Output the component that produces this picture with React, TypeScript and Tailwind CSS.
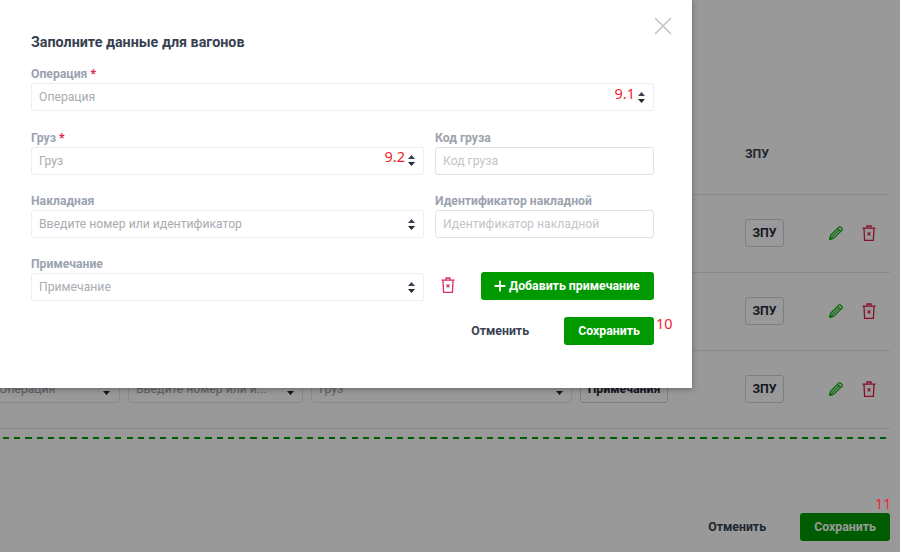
import { Plus, X } from "lucide-react";

const font = { fontFamily: "Roboto, 'Noto Sans', sans-serif" };
const markFont = { fontFamily: "'Noto Sans', sans-serif" };

function Caret() {
  return (
    <svg width="9" height="13" viewBox="0 0 9 13" className="shrink-0">
      <path d="M4.5 1 8 5H1z" fill="#374151" />
      <path d="M4.5 12 8 8H1z" fill="#1f2937" />
    </svg>
  );
}

function Trash({ className }: { className?: string }) {
  return (
    <svg width="14" height="16" viewBox="0 0 14 16" fill="none" stroke="currentColor" strokeWidth="1.3" className={className}>
      <path d="M.5 3.2h13M5 3V1h4v2M2 3.4l.6 11.9h8.8L12 3.4" />
      <path d="M5.6 7.4l2.8 3M8.4 7.4l-2.8 3" strokeWidth="1.2" />
    </svg>
  );
}

function PencilIcon({ className }: { className?: string }) {
  return (
    <svg width="14" height="14" viewBox="0 0 14 14" fill="none" stroke="currentColor" strokeWidth="1.3" className={className}>
      <path d="M.8 13.2l1-4L10 1c.5-.4 1-.4 1.4 0L13 2.600c.4.4.4.9 0 1.400l-8.200 8.200z" />
      <path d="M3 11l7.600-7.600M8.600 2.400l3 3" strokeWidth="1.1" />
      <path d="M.8 13.200l.6-2.400 1.800 1.800z" fill="currentColor" />
    </svg>
  );
}

function SelectBox({ placeholder, mark, className }: { placeholder: string; mark?: string; className?: string }) {
  return (
    <div className={`flex h-[28px] items-center justify-between rounded-[3px] border border-[#eceef1] bg-white pr-[7px] pl-[7px] ${className ?? ""}`}>
      <span className="text-[12.2px] text-[#a9acb1]">{placeholder}</span>
      <div className="flex items-center gap-[2px]">
        {mark && <span className="-mt-[9px] text-[14.5px] leading-none text-[#f5222d]" style={markFont}>{mark}</span>}
        <Caret />
      </div>
    </div>
  );
}

function TextBox({ placeholder }: { placeholder: string }) {
  return (
    <div className="flex h-[28px] items-center rounded-[3px] border border-[#dfe3e8] bg-white pl-[7px]">
      <span className="text-[12.2px] text-[#c2c5c9]">{placeholder}</span>
    </div>
  );
}

function Label({ text, required }: { text: string; required?: boolean }) {
  return (
    <div className="mb-[1px] h-[16px] text-[12.2px] leading-[16px] font-bold text-[#9ca3af]">
      {text}
      {required && <span className="text-[#e11d48]"> *</span>}
    </div>
  );
}

function TableRow({ children }: { children?: React.ReactNode }) {
  return (
    <div className="flex h-[78px] items-center border-b border-[#e5e7eb] pb-[1px]">
      <div className="flex w-[745px] items-center gap-[8px]">{children}</div>
      <div className="flex h-[28px] w-[39px] items-center justify-center rounded-[3px] border border-[#d1d5db] text-[12.3px] font-bold text-[#1f2937]">ЗПУ</div>
      <PencilIcon className="ml-[45px] text-[#12b012]" />
      <Trash className="ml-[19px] text-[#e11d48]" />
    </div>
  );
}

export default function App() {
  return (
    <div className="relative h-[552px] w-[900px] overflow-hidden bg-white" style={font}>
      {/* page under the modal */}
      <div className="pr-[10px]">
        <div className="flex h-[195px] items-center border-b border-[#e5e7eb] pt-[115px]">
          <span className="ml-[745px] text-[12.3px] font-bold text-[#374151]">ЗПУ</span>
        </div>
        <TableRow />
        <TableRow />
        <TableRow>
          <div className="ml-[-10px] flex h-[27px] w-[130px] items-center justify-between rounded-[3px] border border-[#e5e7eb] px-[8px]">
            <span className="text-[12.2px] text-[#9ca3af]">Операция</span>
            <Caret />
          </div>
          <div className="flex h-[27px] w-[175px] items-center justify-between rounded-[3px] border border-[#e5e7eb] px-[7px]">
            <span className="text-[12.2px] text-[#9ca3af]">Введите номер или и...</span>
            <Caret />
          </div>
          <div className="flex h-[27px] w-[261px] items-center justify-between rounded-[3px] border border-[#e5e7eb] px-[7px]">
            <span className="text-[12.2px] text-[#9ca3af]">Груз</span>
            <Caret />
          </div>
          <div className="flex h-[27px] w-[88px] items-center justify-center rounded-[3px] border border-[#d1d5db] text-[12.3px] font-bold text-[#1f2937]">Примечания</div>
        </TableRow>
        <div className="mt-[8px] mr-[4px] ml-[3px] h-[2px] bg-[repeating-linear-gradient(90deg,#009900_0_6px,transparent_6px_11.25px)]" />
        <div className="mt-[74px] flex items-center justify-end gap-[34px]">
          <span className="text-[12.3px] font-bold text-[#374151]">Отменить</span>
          <div className="flex h-[28px] w-[90px] items-center justify-center rounded-[3px] bg-[#009900] text-[12.3px] font-bold text-white">Сохранить</div>
        </div>
      </div>

      {/* overlay */}
      <div className="absolute inset-0 bg-black/40" />
      <span className="absolute top-[495px] left-[875px] text-[14.5px] leading-[16px] text-[#f5222d]" style={markFont}>11</span>

      {/* modal */}
      <div className="absolute top-0 left-0 h-[388px] w-[692px] bg-white pt-[33px] pr-[38px] pl-[31px] shadow-[0_1px_6px_rgba(0,0,0,0.35)]">
        <X size={30} strokeWidth={1.3} className="absolute top-[11px] left-[648px] text-[#c4c4c4]" />
        <div className="mb-[15.4px] h-[18px] text-[14.3px] leading-[18px] font-bold text-[#374151]">Заполните данные для вагонов</div>
        <div className="grid grid-cols-[393px_219px] gap-x-[11px] gap-y-[18.33px]">
          <div className="col-span-2">
            <Label text="Операция" required />
            <SelectBox placeholder="Операция" mark="9.1" />
          </div>
          <div>
            <Label text="Груз" required />
            <SelectBox placeholder="Груз" mark="9.2" />
          </div>
          <div>
            <Label text="Код груза" />
            <TextBox placeholder="Код груза" />
          </div>
          <div>
            <Label text="Накладная" />
            <SelectBox placeholder="Введите номер или идентификатор" />
          </div>
          <div>
            <Label text="Идентификатор накладной" />
            <TextBox placeholder="Идентификатор накладной" />
          </div>
          <div>
            <Label text="Примечание" />
            <SelectBox placeholder="Примечание" />
          </div>
          <div className="flex items-end justify-between">
            <Trash className="mb-[8px] ml-[6px] text-[#d9305c]" />
            <div className="mb-[1px] flex h-[28px] w-[173px] items-center gap-[1px] rounded-[3px] bg-[#009900] pl-[11px] text-[12.3px] font-bold text-white">
              <Plus size={16} strokeWidth={2.8} />
              Добавить примечание
            </div>
          </div>
        </div>
        <div className="relative mt-[16px] flex items-center justify-end gap-[35px]">
          <span className="text-[12.3px] font-bold text-[#374151]">Отменить</span>
          <div className="flex h-[28px] w-[90px] items-center justify-center rounded-[3px] bg-[#009900] text-[12.3px] font-bold text-white">Сохранить</div>
          <span className="absolute top-[-2px] left-[625px] text-[14.5px] leading-[16px] text-[#f5222d]" style={markFont}>10</span>
        </div>
      </div>
    </div>
  );
}
